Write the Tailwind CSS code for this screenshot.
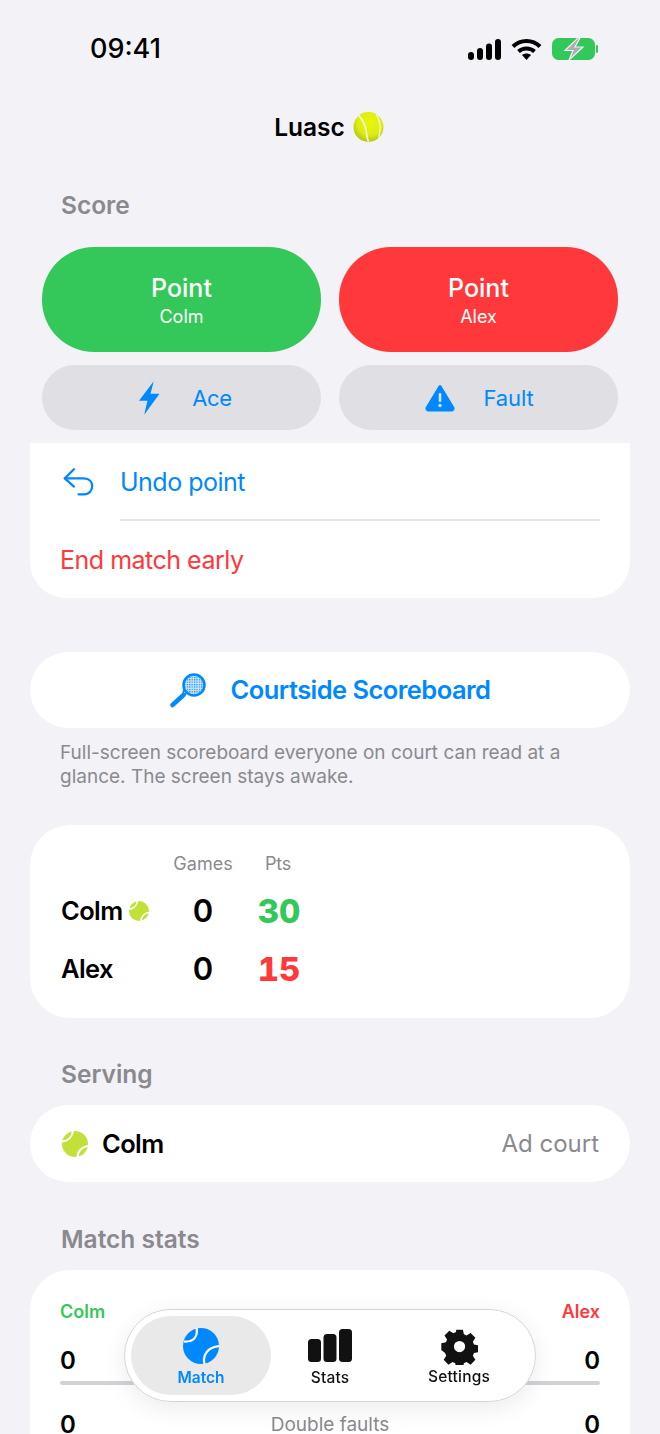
<!DOCTYPE html>
<html lang="en">
<head>
    <meta charset="UTF-8">
    <meta name="viewport" content="width=device-width, initial-scale=1.0">
    <title>Luasc</title>
    <script src="https://cdn.jsdelivr.net/npm/@tailwindcss/browser@4"></script>
</head>
<body class="bg-[#f2f2f7] font-[Inter,sans-serif]">
    <div class="relative w-[660px] h-[1434px] overflow-hidden">
        <!-- Status bar -->
        <div class="h-[98px] pt-[33px] pl-[90px] pr-[62px] flex justify-between items-start">
            <span class="text-[27px] leading-[32px] font-medium text-black">09:41</span>
            <div class="flex items-center gap-[10px] h-[32px]">
                <svg width="33" height="21" viewBox="0 0 33 21" fill="#000">
                    <rect x="0" y="13" width="6" height="8" rx="3"/>
                    <rect x="9" y="9" width="6" height="12" rx="3"/>
                    <rect x="18" y="4.500" width="6" height="16.500" rx="3"/>
                    <rect x="27" y="0" width="6" height="21" rx="3"/>
                </svg>
                <svg width="31" height="22" viewBox="0 0 31 22" fill="none" stroke="#000" stroke-width="4">
                    <path d="M2 8.500C9.500 1 21.500 1 29 8.500"/>
                    <path d="M7.500 13.500C12 9.500 19 9.500 23.500 13.500"/>
                    <path d="M15.500 22l-4.500-5C13.500 15 17.500 15 20 17z" fill="#000" stroke="none"/>
                </svg>
                <svg width="46" height="22" viewBox="0 0 46 22">
                    <rect x="0" y="0" width="43" height="22" rx="6.500" fill="#34c85a"/>
                    <rect x="44" y="7" width="2" height="8" rx="1" fill="#34c85a"/>
                    <path d="M26 0L13 12.500h8L17 22 31 9h-8l5-9z" fill="#aeaeb2" stroke="#f2f2f7" stroke-width="1.200"/>
                </svg>
            </div>
        </div>

        <!-- Title -->
        <div class="h-[58px] pr-[2px] flex justify-center items-center gap-[8px]">
            <span class="text-[24.500px] font-semibold text-black leading-[32px]">Luasc</span>
            <svg width="31" height="32" viewBox="0 0 32 32">
                <defs>
                    <radialGradient id="felt" cx="0.55" cy="0.35" r="0.7">
                        <stop offset="0" stop-color="#eaf70a"/>
                        <stop offset="0.6" stop-color="#dcec10"/>
                        <stop offset="1" stop-color="#a8bc1e"/>
                    </radialGradient>
                </defs>
                <circle cx="16" cy="16" r="15.500" fill="url(#felt)"/>
                <path d="M6 4C10 9 12.500 13 13.500 19C14 23 14 27 16 31" fill="none" stroke="#f3f5d8" stroke-width="1.800"/>
                <path d="M24 3C27 8 28 12 28 17C28 20 27.500 23 26.500 27" fill="none" stroke="#f3f5d8" stroke-width="1.400"/>
            </svg>
        </div>

        <!-- Score -->
        <h2 class="mt-[33px] ml-[61px] text-[24.500px] leading-[32px] font-semibold text-[#8a8a8e]">Score</h2>
        <div class="mt-[26px] mx-[42px] grid grid-cols-2 gap-x-[18px] gap-y-[13px]">
            <button class="h-[105px] pt-[2px] rounded-[52px] bg-[#34c85a] text-white flex flex-col items-center justify-center">
                <span class="text-[25px] leading-[32px] font-medium">Point</span>
                <span class="text-[18px] leading-[24px] mt-[1px]">Colm</span>
            </button>
            <button class="h-[105px] pt-[2px] rounded-[52px] bg-[#ff383c] text-white flex flex-col items-center justify-center">
                <span class="text-[25px] leading-[32px] font-medium">Point</span>
                <span class="text-[18px] leading-[24px] mt-[1px]">Alex</span>
            </button>
            <button class="h-[65px] pl-[8px] rounded-[33px] bg-[#dfdfe4] text-[#0088ff] flex items-center justify-center gap-[32px]">
                <svg width="21" height="34" viewBox="0 0 20 32" fill="#0088ff"><path d="M14 0L0 18.500h8L5 32 19.500 12h-8.500z"/></svg>
                <span class="text-[22px] leading-[30px] tracking-[-0.4px]">Ace</span>
            </button>
            <button class="h-[65px] pl-[2px] rounded-[33px] bg-[#dfdfe4] text-[#0088ff] flex items-center justify-center gap-[28px]">
                <svg width="30" height="28" viewBox="0 0 30 28">
                    <path d="M15 2.500L28 24a1.500 1.500 0 0 1-1.500 2H3.500A1.500 1.500 0 0 1 2 24z" fill="#0088ff" stroke="#0088ff" stroke-width="3" stroke-linejoin="round"/>
                    <rect x="13.700" y="9" width="2.600" height="9" rx="1.300" fill="#dfdfe4"/>
                    <circle cx="15" cy="21.500" r="1.700" fill="#dfdfe4"/>
                </svg>
                <span class="text-[22px] leading-[30px] tracking-[-0.1px]">Fault</span>
            </button>
        </div>

        <!-- Actions -->
        <div class="mt-[13px] mx-[30px] h-[155px] bg-white rounded-b-[36px]">
            <div class="h-[76px] pt-[1px] flex items-center">
                <div class="w-[90px] pl-[33px] flex items-center">
                    <svg width="31" height="30" viewBox="0 0 34 32" fill="none" stroke="#0088ff" stroke-width="2.500" stroke-linecap="round" stroke-linejoin="round">
                        <path d="M12 2L2 12l10 9"/>
                        <path d="M2 12h21c6 0 9 4 9 8.500S29 29.500 23 29.500h-6"/>
                    </svg>
                </div>
                <span class="text-[25px] leading-[32px] tracking-[-0.5px] text-[#0088ff]">Undo point</span>
            </div>
            <div class="ml-[90px] mr-[30px] h-[2px] bg-[#e6e6ea]"></div>
            <div class="h-[77px] pl-[30px] flex items-center">
                <span class="text-[25px] leading-[32px] tracking-[-0.5px] text-[#ff383c]">End match early</span>
            </div>
        </div>

        <!-- Courtside -->
        <div class="mt-[54px] mx-[30px] h-[76px] rounded-full bg-white flex items-center justify-center gap-[24px]">
            <svg width="37" height="36" viewBox="0 0 37 36">
                <defs>
                    <pattern id="mesh" width="2.400" height="2.400" patternUnits="userSpaceOnUse">
                        <rect width="2.400" height="2.400" fill="#cfe5fb"/>
                        <rect width="1.200" height="1.200" fill="#0088ff"/>
                    </pattern>
                </defs>
                <path d="M2.500 33l11-10" stroke="#0088ff" stroke-width="4.500" stroke-linecap="round"/>
                <path d="M13 23c3-1 4-2 5-4" stroke="#0088ff" stroke-width="2" fill="none"/>
                <path d="M13 23c0-3 1-5 2-6" stroke="#0088ff" stroke-width="2" fill="none"/>
                <circle cx="24" cy="13" r="10.500" fill="url(#mesh)" stroke="#0088ff" stroke-width="2.500"/>
            </svg>
            <span class="text-[25.500px] leading-[32px] tracking-[-0.55px] font-semibold text-[#0088ff]">Courtside Scoreboard</span>
        </div>
        <p class="mt-[13px] ml-[60px] w-[540px] text-[19px] leading-[24px] text-[#8a8a8e]">Full-screen scoreboard everyone on court can read at a glance. The screen stays awake.</p>

        <!-- Score table -->
        <div class="mt-[36px] mx-[30px] h-[193px] bg-white rounded-[40px] pt-[27px] pl-[31px]">
            <div class="grid grid-cols-[112px_60px_92px] items-center text-center">
                <div></div>
                <div class="text-[18px] leading-[24px] text-[#8a8a8e] whitespace-nowrap">Games</div>
                <div class="pr-[2px] text-[18px] leading-[24px] tracking-[-0.3px] text-[#8a8a8e]">Pts</div>
                <div class="h-[58px] mt-[6px] flex items-center gap-[6px] text-left">
                    <span class="text-[25.500px] leading-[32px] tracking-[-0.6px] font-semibold text-black">Colm</span>
                    <svg width="20" height="20" viewBox="0 0 40 40"><use href="#ball"/></svg>
                </div>
                <div class="mt-[6px] text-[31px] leading-[40px] font-semibold text-black">0</div>
                <div class="mt-[6px] text-[33px] leading-[40px] font-extrabold tabular-nums text-[#34c85a]">30</div>
                <div class="h-[58px] flex items-center text-left">
                    <span class="text-[25.500px] leading-[32px] tracking-[-0.6px] font-semibold text-black">Alex</span>
                </div>
                <div class="text-[31px] leading-[40px] font-semibold text-black">0</div>
                <div class="text-[33px] leading-[40px] font-extrabold tabular-nums text-[#ff383c]">15</div>
            </div>
        </div>

        <!-- Serving -->
        <h2 class="mt-[40px] ml-[61px] text-[24.500px] leading-[32px] font-semibold text-[#8a8a8e]">Serving</h2>
        <div class="mt-[15px] mx-[30px] h-[77px] rounded-full bg-white flex items-center pl-[32px] pr-[31px]">
            <svg width="26" height="26" viewBox="0 0 40 40" class="mr-[14px]">
                <defs>
                    <g id="ball">
                        <circle cx="20" cy="20" r="20" fill="#c2e03a"/>
                        <path d="M0 16C9 16 16 9 17 0M24 40C24 31 31 24 40 23" fill="none" stroke="#fff" stroke-width="3"/>
                    </g>
                </defs>
                <use href="#ball"/>
            </svg>
            <span class="text-[25.500px] leading-[32px] tracking-[-0.6px] font-semibold text-black">Colm</span>
            <span class="ml-auto text-[24px] leading-[32px] text-[#8a8a8e]">Ad court</span>
        </div>

        <!-- Match stats -->
        <h2 class="mt-[41px] ml-[61px] text-[24.500px] leading-[32px] font-semibold text-[#8a8a8e]">Match stats</h2>
        <div class="mt-[15px] mx-[30px] h-[240px] bg-white rounded-[40px] pt-[30px] px-[30px]">
            <div class="flex justify-between text-[18px] leading-[24px] font-semibold">
                <span class="text-[#34c85a]">Colm</span>
                <span class="text-[#ff383c]">Alex</span>
            </div>
            <div class="mt-[22px] flex justify-between text-[24px] leading-[30px] font-semibold text-black">
                <span>0</span>
                <span class="text-[19px] font-normal text-[#8a8a8e]">Aces</span>
                <span>0</span>
            </div>
            <div class="mt-[5px] h-[4px] rounded-full bg-[#d1d1d6]"></div>
            <div class="mt-[25px] flex justify-between items-center text-[24px] leading-[30px] font-semibold text-black">
                <span>0</span>
                <span class="text-[19px] font-normal text-[#8a8a8e]">Double faults</span>
                <span>0</span>
            </div>
        </div>

        <!-- Tab bar -->
        <div class="absolute left-[124px] top-[1309px] w-[412px] h-[93px] rounded-full bg-white/95 backdrop-blur-sm border border-[#d4d4d4] shadow-[0_6px_24px_rgba(0,0,0,0.08)] p-[6px] grid grid-cols-[140px_118px_1fr]">
            <div class="rounded-full bg-[#e9e9e9] flex flex-col items-center pt-[12px]">
                <svg width="36" height="36" viewBox="0 0 40 40">
                    <circle cx="20" cy="20" r="20" fill="#0088ff"/>
                    <path d="M15 0C17 9 12 16 1 15M24 40C21 30 28 21 40 20" fill="none" stroke="#fff" stroke-width="2.500"/>
                </svg>
                <span class="mt-[4px] text-[15.500px] leading-[20px] font-semibold text-[#0088ff]">Match</span>
            </div>
            <div class="flex flex-col items-center pt-[13px]">
                <svg width="44" height="33" viewBox="0 0 44 33" fill="#111">
                    <rect x="0" y="10" width="13" height="23" rx="3.500"/>
                    <rect x="15.500" y="5" width="13" height="28" rx="3.500"/>
                    <rect x="31" y="0" width="13" height="33" rx="3.500"/>
                </svg>
                <span class="mt-[6px] text-[15.500px] leading-[20px] font-medium tracking-[0.2px] text-[#111]">Stats</span>
            </div>
            <div class="flex flex-col items-center pt-[12px]">
                <svg width="37" height="37" viewBox="0 0 24 24" fill="#111" fill-rule="evenodd">
                    <path d="M9.600 0h4.800l.7 3.300 1.900.8 2.900-1.800 3.400 3.400-1.800 2.900.8 1.900 3.300.7v4.800l-3.300.7-.8 1.900 1.800 2.900-3.400 3.400-2.900-1.800-1.900.8-.7 3.300H9.600l-.7-3.300-1.900-.8-2.900 1.800-3.400-3.400 1.800-2.900-.8-1.900L-1 14.400V9.600l3.300-.7.8-1.900L1.300 4.100l3.400-3.400 2.900 1.800 1.900-.8zM12 8a4 4 0 1 0 0 8 4 4 0 0 0 0-8z" transform="translate(1.100 1.100) scale(.91)"/>
                </svg>
                <span class="mt-[2px] text-[15.500px] leading-[20px] font-medium tracking-[0.2px] text-[#111]">Settings</span>
            </div>
        </div>
    </div>
</body>
</html>
